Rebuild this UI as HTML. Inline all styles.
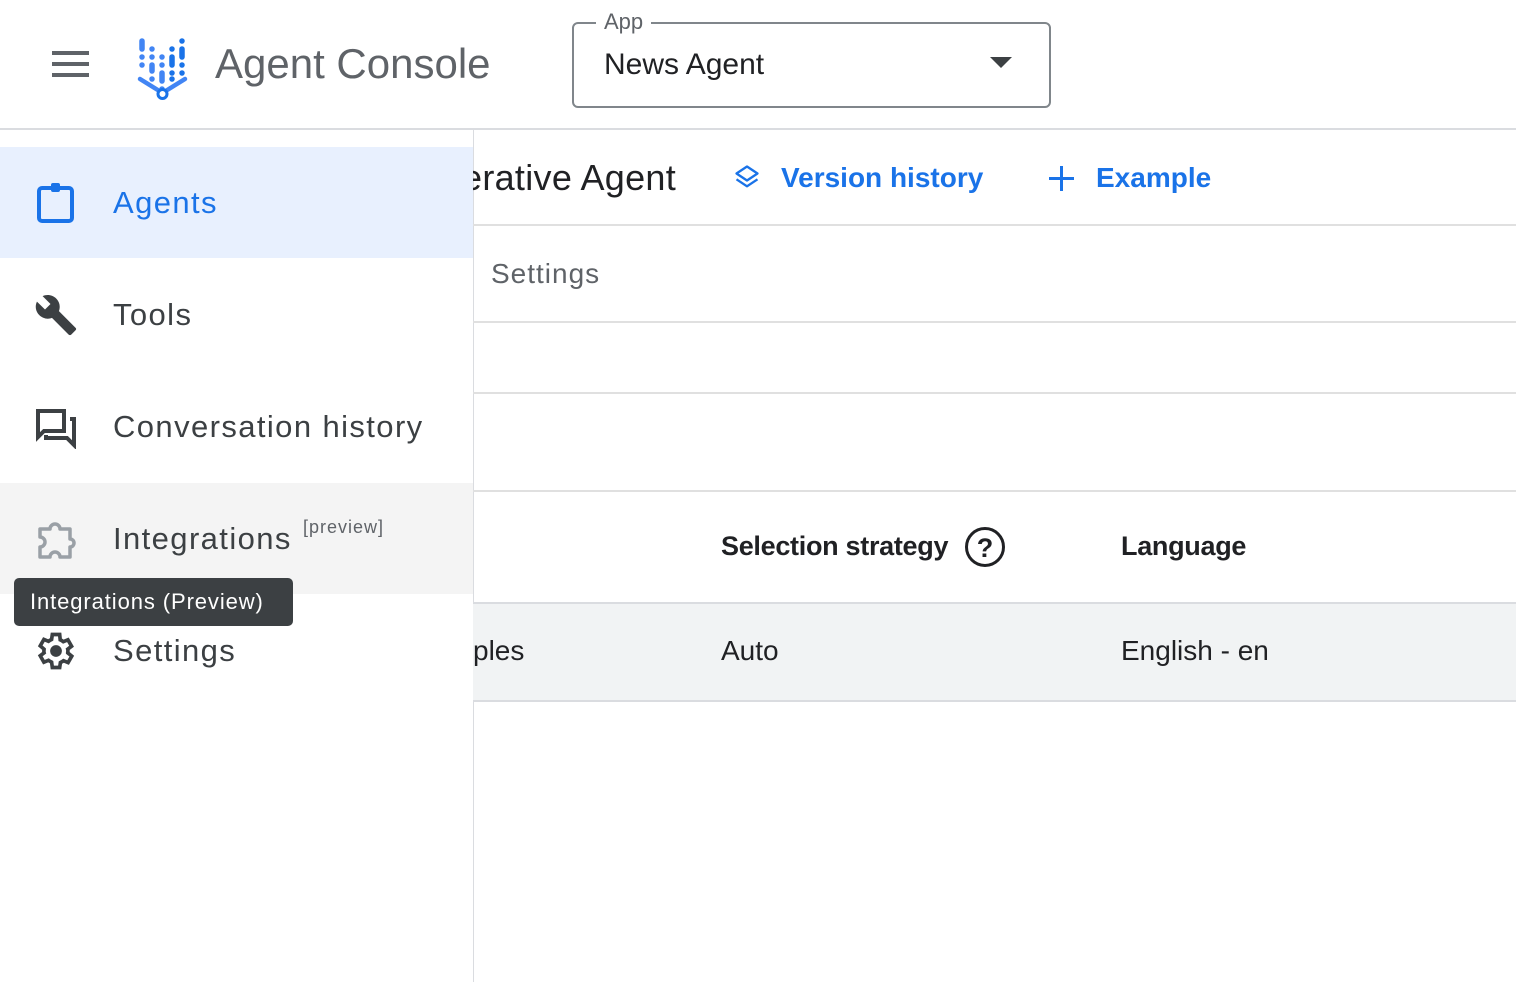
<!DOCTYPE html>
<html><head><meta charset="utf-8"><style>
*{box-sizing:border-box;margin:0;padding:0}
body{width:1516px;height:982px;overflow:hidden;background:#fff;font-family:"Liberation Sans",Arial,sans-serif;color:#3c4043;position:relative}
.a{position:absolute}
.hl{position:absolute;left:473px;right:0;height:2px;background:#e0e0e0}
.nav{position:absolute;left:0;width:473px;height:111px;display:flex;align-items:center}
.nav span{position:absolute;left:113px;font-size:31px;letter-spacing:1.4px;color:#3c4043}
.nav svg{position:absolute;left:34px}
</style></head><body>
<svg class="a" style="left:52px;top:51px" width="37" height="26"><rect y="0" width="37" height="4" fill="#5f6368"/><rect y="11" width="37" height="4" fill="#5f6368"/><rect y="22" width="37" height="4" fill="#5f6368"/></svg>
<svg class="a" style="left:136px;top:36px" width="60" height="66" viewBox="0 0 60 66">
<g stroke-linecap="round" stroke-width="5.5" fill="none">
<path d="M6 5v8M6 21v0M6 29v0" stroke="#4285f4"/>
<path d="M16 13v0M16 21v0M16 29v6M16 43v0" stroke="#4285f4"/>
<path d="M26 21v0M26 29v0M26 37v8M26 53v0" stroke="#4285f4"/>
<path d="M36 13v0M36 21v8M36 37v0M36 43v0" stroke="#1a73e8"/>
<path d="M46 5v0M46 13v8M46 29v0M46 37v0" stroke="#1a73e8"/>
<path d="M4 43l21 13M49 43l-21 13" stroke="#4285f4" stroke-width="4.5"/>
</g><circle cx="26.5" cy="58" r="4.5" fill="#fff" stroke="#1a73e8" stroke-width="3"/></svg>
<div class="a" style="left:215px;top:40px;font-size:42px;color:#5f6368">Agent Console</div>
<div class="a" style="left:572px;top:22px;width:479px;height:86px;border:2px solid #80868b;border-radius:6px"></div>
<div class="a" style="left:596px;top:9px;background:#fff;padding:0 8px;font-size:22px;color:#5f6368">App</div>
<div class="a" style="left:604px;top:48px;font-size:30px;color:#202124">News Agent</div>
<svg class="a" style="left:990px;top:57px" width="22" height="11"><path d="M0 0h22L11 11z" fill="#3c4043"/></svg>
<div class="a" style="left:0;top:128px;width:1516px;height:2px;background:#dadce0"></div>
<div class="a" style="left:473px;top:130px;width:1px;height:852px;background:#dadce0"></div>
<div class="a" style="left:462px;top:157px;font-size:36px;color:#202124;letter-spacing:.3px">erative Agent</div>
<svg class="a" style="left:733px;top:162px" width="28" height="30" viewBox="0 0 24 24"><path d="M12 3L3 9l9 6 9-6z M3 14l9 6 9-6" fill="none" stroke="#1a73e8" stroke-width="2" stroke-linejoin="round"/></svg>
<div class="a" style="left:781px;top:162px;font-size:28px;color:#1a73e8;font-weight:bold">Version history</div>
<svg class="a" style="left:1048px;top:165px" width="27" height="27"><path d="M13.5 1v25M1 13.5h25" stroke="#1a73e8" stroke-width="3"/></svg>
<div class="a" style="left:1096px;top:162px;font-size:28px;color:#1a73e8;font-weight:bold">Example</div>
<div class="hl" style="top:224px"></div>
<div class="a" style="left:491px;top:258px;font-size:28px;color:#5f6368;letter-spacing:1px">Settings</div>
<div class="hl" style="top:321px"></div>
<div class="hl" style="top:392px"></div>
<div class="hl" style="top:490px"></div>
<div class="a" style="left:721px;top:531px;font-size:27px;font-weight:bold;color:#202124;letter-spacing:-.3px">Selection strategy</div>
<svg class="a" style="left:964px;top:526px" width="42" height="42"><circle cx="21" cy="21" r="18.5" fill="none" stroke="#202124" stroke-width="3"/><text x="21" y="31" text-anchor="middle" font-size="27" font-weight="bold" font-family="Liberation Sans" fill="#202124">?</text></svg>
<div class="a" style="left:1121px;top:531px;font-size:27px;font-weight:bold;color:#202124;letter-spacing:-.3px">Language</div>
<div class="a" style="left:473px;top:602px;right:0;height:100px;background:#f1f3f4;border-top:2px solid #dadce0;border-bottom:2px solid #dadce0"></div>
<div class="a" style="left:473px;top:635px;font-size:28px;color:#202124">ples</div>
<div class="a" style="left:721px;top:635px;font-size:28px;color:#202124">Auto</div>
<div class="a" style="left:1121px;top:635px;font-size:28px;color:#202124">English - en</div>
<div class="nav" style="top:147px;background:#e8f0fe"><svg width="44" height="44" viewBox="0 0 44 44"><rect x="5" y="7" width="33" height="33" rx="3" fill="none" stroke="#1a73e8" stroke-width="4"/><rect x="17" y="2" width="9" height="9" rx="2" fill="#1a73e8"/></svg><span style="color:#1a73e8">Agents</span></div>
<div class="nav" style="top:259px"><svg width="44" height="44" viewBox="0 0 24 24"><path d="M22.7 19l-9.1-9.1c.9-2.3.4-5-1.5-6.9-2-2-5-2.4-7.4-1.3L9 6 6 9 1.6 4.7C.4 7.1.9 10.1 2.9 12.1c1.9 1.9 4.6 2.4 6.9 1.5l9.1 9.1c.4.4 1 .4 1.4 0l2.3-2.3c.5-.4.5-1.1.1-1.4z" fill="#3c4043"/></svg><span>Tools</span></div>
<div class="nav" style="top:371px"><svg width="44" height="44" viewBox="0 0 44 44"><path d="M4 6h26v20H10l-6 6z" fill="none" stroke="#3c4043" stroke-width="4"/><path d="M36 14h4v26l-7-7H12v-3" fill="none" stroke="#3c4043" stroke-width="4"/></svg><span>Conversation history</span></div>
<div class="nav" style="top:483px;background:#f4f4f4"><svg width="44" height="44" viewBox="0 0 44 44"><path d="M6 12h10a5 5 0 0 1 10 0h10v10a4 4 0 0 1 0 8v10H26a5 5 0 0 0-10 0H6V30a5 5 0 0 0 0-10z" fill="none" stroke="#9aa0a6" stroke-width="3.5" stroke-linejoin="round"/></svg><span>Integrations</span><div class="a" style="left:303px;top:34px;font-size:18px;color:#5f6368;letter-spacing:1px">[preview]</div></div>
<div class="nav" style="top:595px"><svg width="44" height="44" viewBox="0 0 24 24"><path d="M19.4 13c0-.3.1-.7.1-1s0-.7-.1-1l2.1-1.6-2-3.5-2.5 1a7 7 0 0 0-1.7-1L15 3h-4l-.4 2.7c-.6.3-1.2.6-1.7 1l-2.5-1-2 3.5L6.5 11c0 .3-.1.7-.1 1s0 .7.1 1l-2.1 1.6 2 3.5 2.5-1c.5.4 1.1.7 1.7 1L11 21h4l.4-2.7c.6-.3 1.2-.6 1.7-1l2.5 1 2-3.5z" transform="translate(-1 0)" fill="none" stroke="#3c4043" stroke-width="2"/><circle cx="12" cy="12" r="3.2" fill="#3c4043"/></svg><span>Settings</span></div>
<div class="a" style="left:14px;top:578px;width:279px;height:48px;background:#3c4043;border-radius:5px;color:#fff;font-size:22px;line-height:48px;padding-left:16px;letter-spacing:.9px">Integrations (Preview)</div>
</body></html>
